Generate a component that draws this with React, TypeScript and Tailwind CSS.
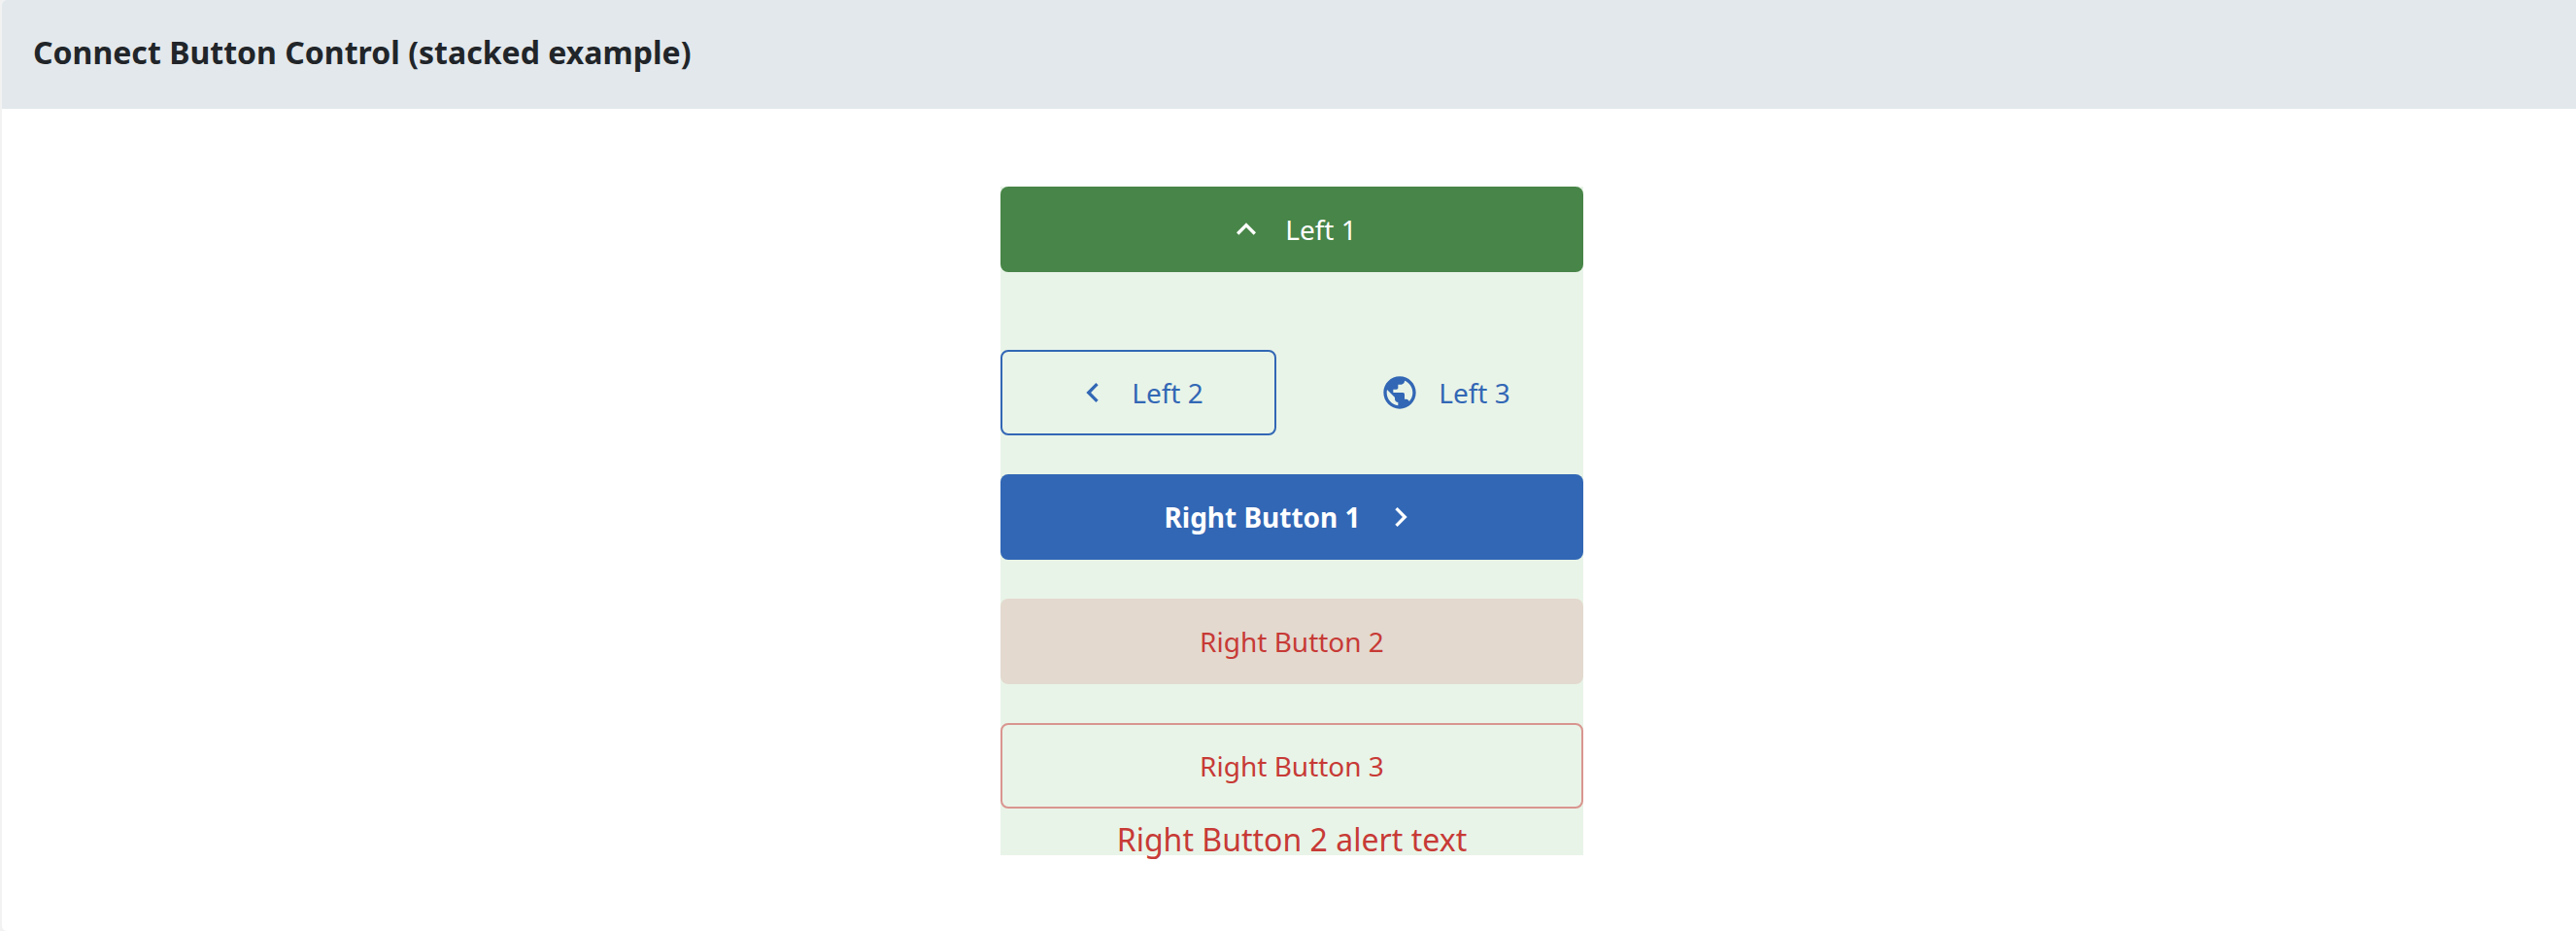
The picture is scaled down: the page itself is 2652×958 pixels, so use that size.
import type { ReactNode } from "react";

const CHEVRON_UP = "M12 8l-6 6 1.41 1.41L12 10.83l4.59 4.58L18 14z";
const CHEVRON_LEFT = "M15.41 7.41L14 6l-6 6 6 6 1.41-1.41L10.83 12z";
const CHEVRON_RIGHT = "M10 6L8.59 7.41 13.17 12l-4.58 4.59L10 18l6-6z";
const GLOBE =
  "M12 2C6.48 2 2 6.48 2 12s4.48 10 10 10 10-4.48 10-10S17.52 2 12 2zm-1 17.93c-3.95-.49-7-3.85-7-7.93 0-.62.08-1.21.21-1.79L9 15v1c0 1.1.9 2 2 2v1.93zm6.9-2.54c-.26-.81-1-1.39-1.9-1.39h-1v-3c0-.55-.45-1-1-1H8v-2h2c.55 0 1-.45 1-1V7h2c1.1 0 2-.9 2-2v-.41c2.93 1.19 5 4.06 5 7.41 0 2.08-.8 3.97-2.1 5.39z";

function Icon({ d }: { d: string }) {
  return (
    <svg viewBox="0 0 24 24" className="size-10 shrink-0 fill-current" aria-hidden="true">
      <path d={d} />
    </svg>
  );
}

function Button({ className, children }: { className: string; children: ReactNode }) {
  return (
    <button className={`flex h-22 items-center justify-center rounded-lg text-[28px] ${className}`}>
      {children}
    </button>
  );
}

export default function App() {
  return (
    <div className="h-[958px] bg-[#f2f2f2] pl-0.5 font-['Noto_Sans',sans-serif]">
      <section className="flex h-[958px] flex-col rounded-l-[5px] bg-white">
        <header className="flex h-28 items-center rounded-tl-[5px] bg-[#e3e8ec] pb-1 pl-8">
          <h2 className="text-[32px] leading-12 font-bold tracking-[0.02px] text-[#212529]">
            Connect Button Control (stacked example)
          </h2>
        </header>
        <main className="flex justify-center pt-20 pl-1.5">
          <div className="flex h-[688px] w-[600px] flex-col bg-[#e9f4e8]">
            <Button className="gap-5 bg-[#488548] text-white">
              <Icon d={CHEVRON_UP} />
              <span>Left 1</span>
            </Button>
            <div className="mt-20 grid grid-cols-2 gap-8">
              <Button className="gap-5 border-2 border-[#3267b5] text-[#3267b5]">
                <Icon d={CHEVRON_LEFT} />
                <span>Left 2</span>
              </Button>
              <Button className="gap-5 text-[#3267b5]">
                <Icon d={GLOBE} />
                <span>Left 3</span>
              </Button>
            </div>
            <div className="mt-10 flex flex-col gap-10">
              <Button className="gap-[21px] bg-[#3267b5] font-bold text-white">
                <span>Right Button 1</span>
                <Icon d={CHEVRON_RIGHT} />
              </Button>
              <Button className="bg-[#e3d9cf] text-[#c73a36]">Right Button 2</Button>
              <Button className="border-2 border-[#d9958f] text-[#c73a36]">Right Button 3</Button>
            </div>
            <p className="h-12 text-center text-[32px] leading-16 tracking-[0.02px] text-[#c73a36]">
              Right Button 2 alert text
            </p>
          </div>
        </main>
      </section>
    </div>
  );
}
